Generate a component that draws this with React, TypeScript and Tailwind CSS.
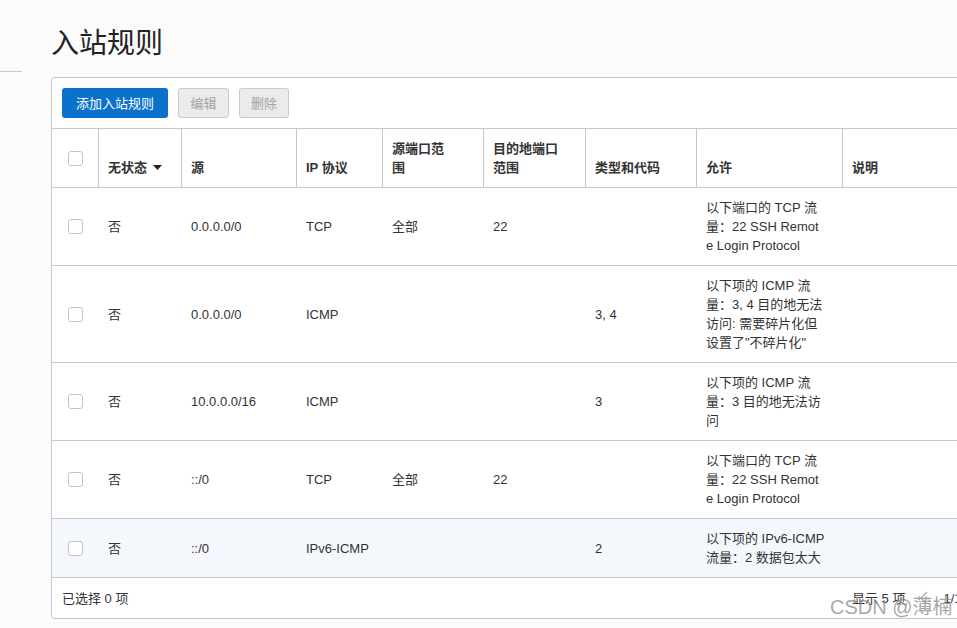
import React from "react";

const font = { fontFamily: '"Liberation Sans", "Noto Sans CJK SC", sans-serif' };

function Checkbox() {
  return <div className="mx-auto h-[15px] w-[15px] rounded-[3px] border border-[#c2c4c8] bg-white" />;
}

type Row = {
  src: string;
  proto: string;
  srcPort: string;
  dstPort: string;
  type: string;
  allow: string[];
  hl?: boolean;
};

const rows: Row[] = [
  { src: "0.0.0.0/0", proto: "TCP", srcPort: "全部", dstPort: "22", type: "", allow: ["以下端口的 TCP 流", "量：22 SSH Remot", "e Login Protocol"] },
  { src: "0.0.0.0/0", proto: "ICMP", srcPort: "", dstPort: "", type: "3, 4", allow: ["以下项的 ICMP 流", "量：3, 4 目的地无法", "访问: 需要碎片化但", "设置了\"不碎片化\""] },
  { src: "10.0.0.0/16", proto: "ICMP", srcPort: "", dstPort: "", type: "3", allow: ["以下项的 ICMP 流", "量：3 目的地无法访", "问"] },
  { src: "::/0", proto: "TCP", srcPort: "全部", dstPort: "22", type: "", allow: ["以下端口的 TCP 流", "量：22 SSH Remot", "e Login Protocol"] },
  { src: "::/0", proto: "IPv6-ICMP", srcPort: "", dstPort: "", type: "2", allow: ["以下项的 IPv6-ICMP", "流量：2 数据包太大"], hl: true },
];

const th = "border-r border-[#c6c8cd] pl-[9px] pr-2 py-[10px] align-bottom text-left font-bold";
const td = "pl-[9px] pr-2 py-[10px] align-middle border-b border-[#c6c8cd]";

export default function App() {
  return (
    <div style={font} className="relative h-[628px] w-[957px] overflow-hidden bg-[#fbfbfb] text-[13px] leading-[19px] text-[#333]">
      <div className="absolute left-0 top-[71px] h-px w-[22px] bg-[#c8c9ce]" />
      <div className="pl-[51px] pt-[26px]">
        <h1 className="h-[51px] text-[28px] leading-[36px] text-[#222]">入站规则</h1>
        <div className="w-[1000px] rounded-[3px] border border-[#c6c8cd] bg-white">
          <div className="flex gap-[10px] px-[10px] pb-[10px] pt-[10px]">
            <button className="h-[30px] w-[106px] rounded-[3px] bg-[#0a72cc] text-white">添加入站规则</button>
            <button className="h-[30px] w-[51px] rounded-[3px] border border-[#c9cacd] bg-[#ebebeb] text-[#a3a3a3]">编辑</button>
            <button className="h-[30px] w-[50px] rounded-[3px] border border-[#c9cacd] bg-[#ebebeb] text-[#a3a3a3]">删除</button>
          </div>
          <table className="w-full table-fixed border-separate border-spacing-0">
            <colgroup>
              <col className="w-[47px]" />
              <col className="w-[83px]" />
              <col className="w-[115px]" />
              <col className="w-[86px]" />
              <col className="w-[101px]" />
              <col className="w-[102px]" />
              <col className="w-[111px]" />
              <col className="w-[146px]" />
              <col />
            </colgroup>
            <thead>
              <tr>
                <th className="border-y border-r border-[#c6c8cd] align-middle"><Checkbox /></th>
                <th className={th + " border-y"}>
                  <span className="inline-flex items-center gap-[6px]">无状态
                    <svg width="9" height="5" viewBox="0 0 9 5"><path d="M0 0h9L4.5 5z" fill="#222" /></svg>
                  </span>
                </th>
                <th className={th + " border-y"}>源</th>
                <th className={th + " border-y"}>IP 协议</th>
                <th className={th + " border-y"}>源端口范<br />围</th>
                <th className={th + " border-y"}>目的地端口<br />范围</th>
                <th className={th + " border-y"}>类型和代码</th>
                <th className={th + " border-y"}>允许</th>
                <th className={th + " border-y border-r-0"}>说明</th>
              </tr>
            </thead>
            <tbody>
              {rows.map((r, i) => (
                <tr key={i} className={r.hl ? "bg-[#f4f7fc]" : ""}>
                  <td className="border-b border-[#c6c8cd] align-middle"><Checkbox /></td>
                  <td className={td}>否</td>
                  <td className={td}>{r.src}</td>
                  <td className={td}>{r.proto}</td>
                  <td className={td}>{r.srcPort}</td>
                  <td className={td}>{r.dstPort}</td>
                  <td className={td}>{r.type}</td>
                  <td className={td}>
                    {r.allow.map((l, j) => (
                      <div key={j} className="whitespace-nowrap">{l}</div>
                    ))}
                  </td>
                  <td className={td}></td>
                </tr>
              ))}
            </tbody>
          </table>
          <div className="flex h-[40px] items-center px-[10px]">
            <span className="w-[790px] whitespace-nowrap">已选择 0 项</span>
            <div className="flex items-center gap-[14px] whitespace-nowrap">
              <span>显示 5 项</span>
              <svg width="10" height="14" viewBox="0 0 10 14"><path d="M8 1L2 7l6 6" stroke="#b5b5b5" strokeWidth="1.5" fill="none" /></svg>
              <span>1/1</span>
            </div>
          </div>
        </div>
      </div>
      <div className="pointer-events-none absolute left-[830px] top-[594px] whitespace-nowrap text-[20px] leading-[26px] text-[#8f8f8f]/80">CSDN @薄楠</div>
    </div>
  );
}
